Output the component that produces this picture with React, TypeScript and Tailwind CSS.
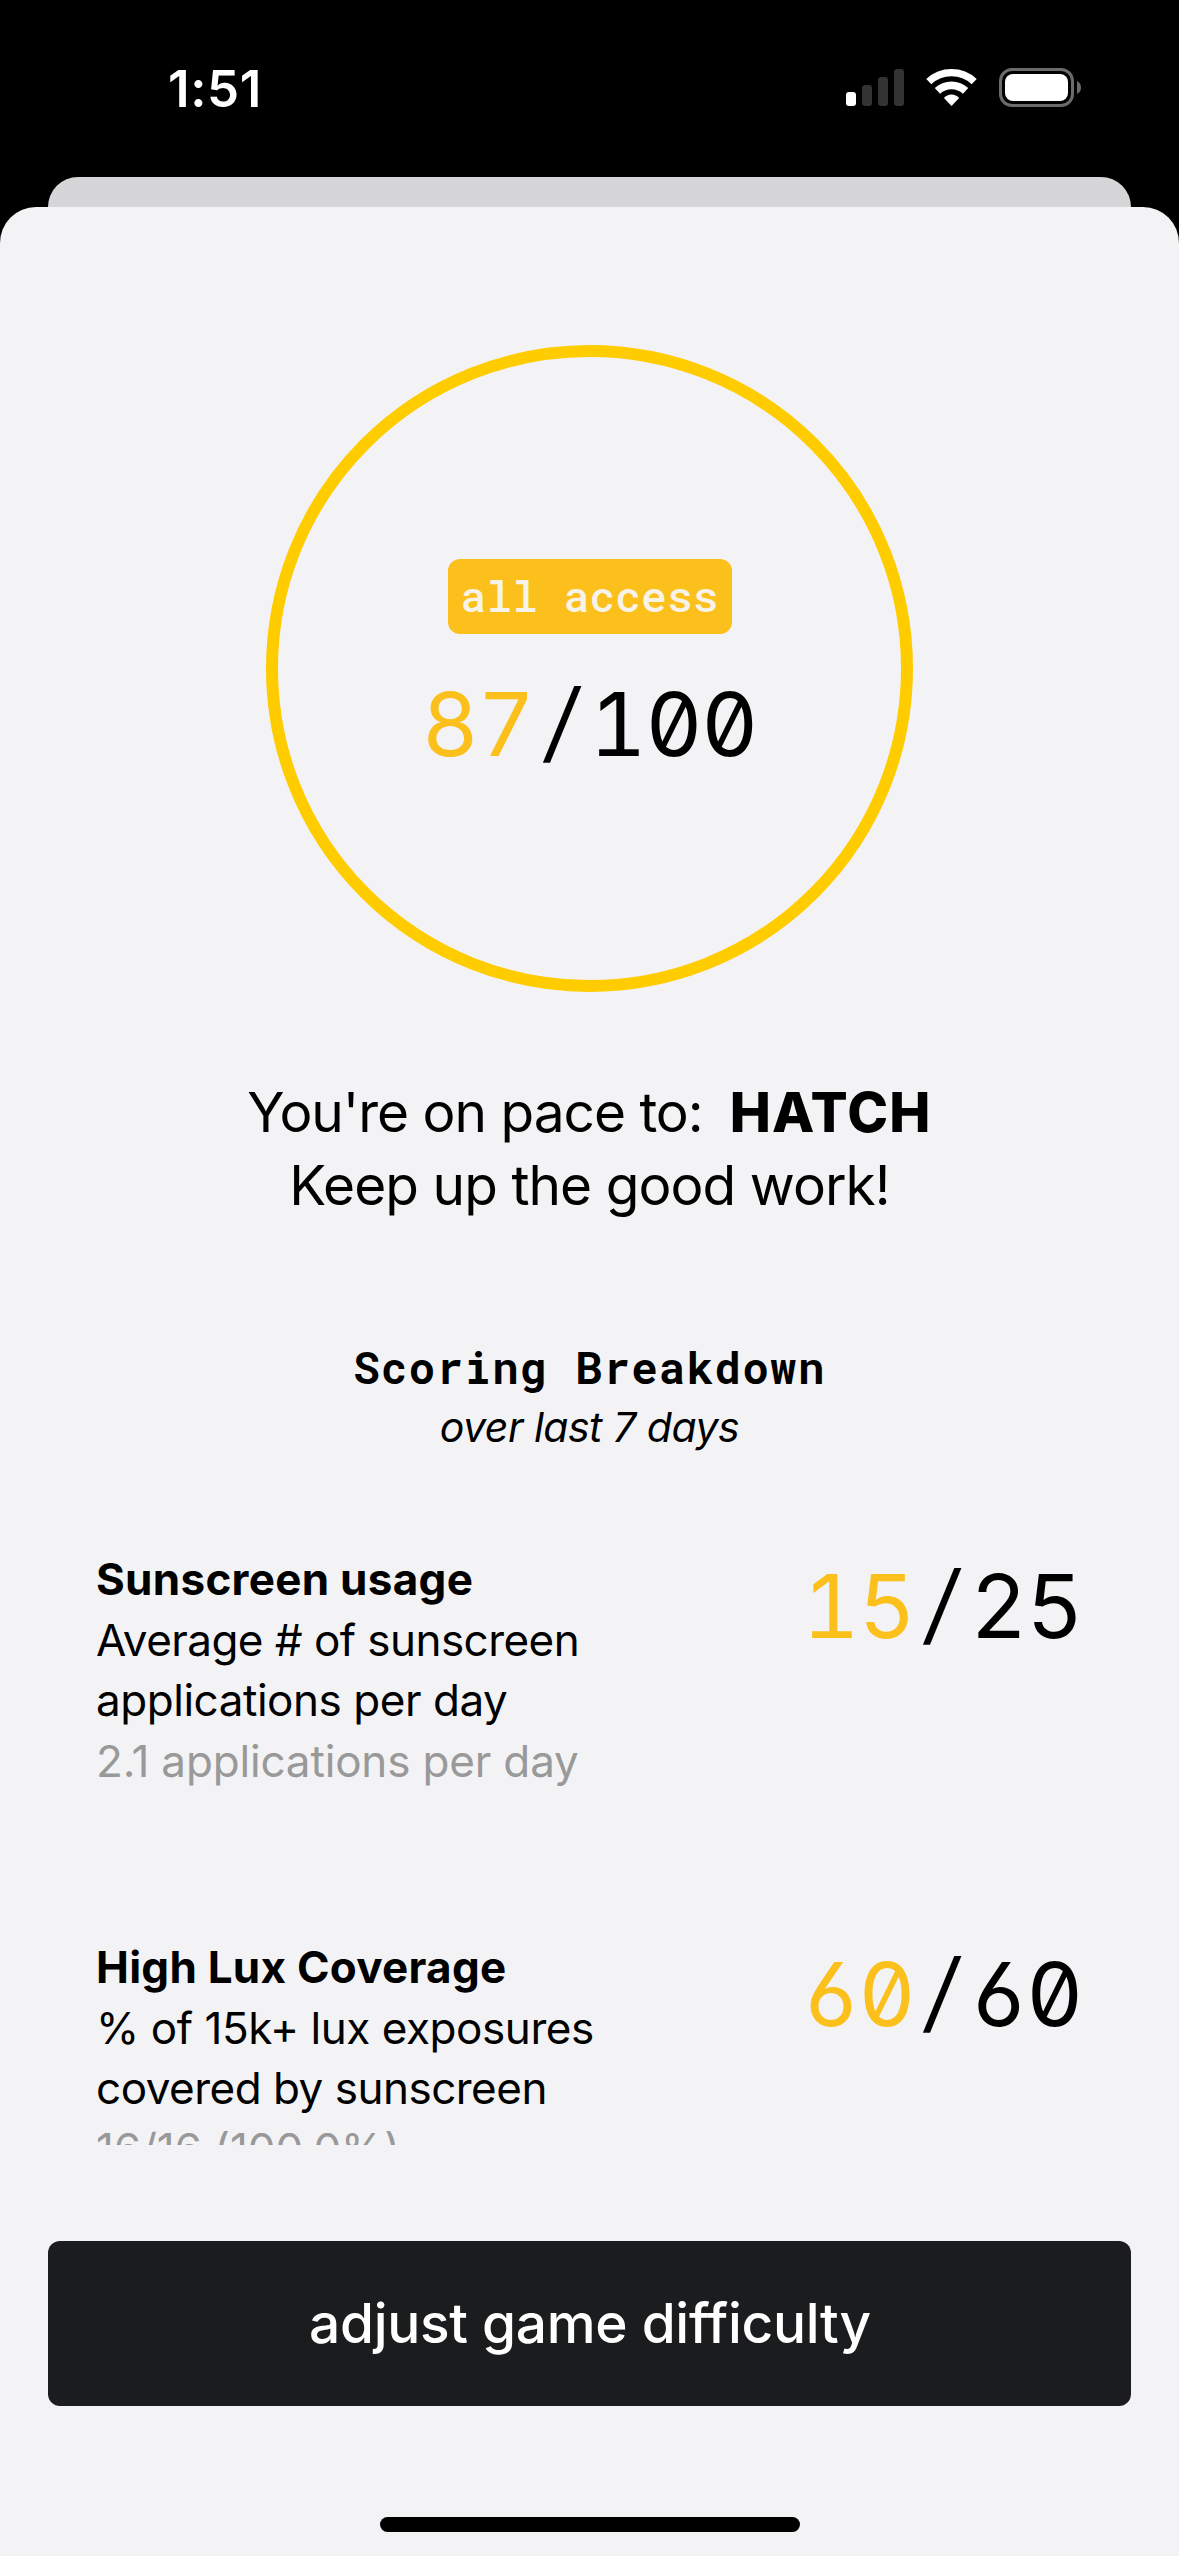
import React from 'react';

interface Metric {
  title: string;
  titleClass: string;
  lines: { text: string; className: string }[];
  value: string;
  valueClass: string;
  score: number;
  max: number;
}

interface ScoreProps {
  score: number;
  max: number;
}

const metrics: Metric[] = [
  {
    title: 'Sunscreen usage',
    titleClass: 'tracking-[0.29px]',
    lines: [
      { text: 'Average # of sunscreen', className: 'tracking-[-0.55px]' },
      { text: 'applications per day', className: 'tracking-[-0.46px]' },
    ],
    value: '2.1 applications per day',
    valueClass: 'tracking-[-0.16px]',
    score: 15,
    max: 25,
  },
  {
    title: 'High Lux Coverage',
    titleClass: 'tracking-[0.26px]',
    lines: [
      { text: '% of 15k+ lux exposures', className: 'tracking-[-0.44px]' },
      { text: 'covered by sunscreen', className: 'tracking-[-0.5px]' },
    ],
    value: '16/16 (100.0%)',
    valueClass: 'tracking-[-0.1px]',
    score: 60,
    max: 60,
  },
];

const StatusBar: React.FC = () => (
  <div className="flex h-[177px] items-start justify-between pt-[58px] pr-[97px] pl-[168px]">
    <span className="text-[51px] leading-[61px] font-semibold tracking-[0.6px] text-white">1:51</span>
    <svg width="236" height="40" viewBox="0 0 236 40" className="mt-[10px]">
      {/* signal */}
      <rect x="0" y="24" width="10" height="14" rx="3" fill="#fff" />
      <rect x="16" y="17" width="10" height="21" rx="3" fill="#333" />
      <rect x="32" y="9" width="10" height="29" rx="3" fill="#333" />
      <rect x="48" y="1" width="10" height="37" rx="3" fill="#333" />
      {/* wifi */}
      <g fill="none" stroke="#fff">
        <path d="M82.8 13.6A33.3 33.3 0 0 1 128.2 13.6" strokeWidth="7.4" />
        <path d="M91.4 22.9A20.7 20.7 0 0 1 119.6 22.9" strokeWidth="7.8" />
      </g>
      <path d="M97.9 29.9Q101 26.6 105.5 26.4Q110 26.6 113.1 29.9L105.5 38Z" fill="#fff" />
      {/* battery */}
      <rect x="154.5" y="1.5" width="72" height="36" rx="11.5" fill="none" stroke="#6b6b6b" strokeWidth="3" />
      <rect x="159" y="6" width="63" height="27" rx="8" fill="#fff" />
      <path d="M231 13Q235 15 235 19.5Q235 24 231 26Z" fill="#6b6b6b" />
    </svg>
  </div>
);

const Score: React.FC<ScoreProps> = ({ score, max }) => (
  <p className="flex text-[88px] leading-[96px] tracking-[-1.2px] [font-feature-settings:'tnum','zero','ss01']">
    <span className="text-[#fbc01b]">{score}</span>
    <span className="w-[56px] -translate-y-[3px] -skew-x-[8deg] text-center">/</span>
    <span>{max}</span>
  </p>
);

const MetricRow: React.FC<{ metric: Metric }> = ({ metric }) => (
  <div className="flex items-start justify-between text-[44px]">
    <div className="whitespace-nowrap">
      <h3 className={`leading-[61px] font-bold ${metric.titleClass}`}>{metric.title}</h3>
      {metric.lines.map((line) => (
        <p key={line.text} className={`leading-[60px] ${line.className}`}>
          {line.text}
        </p>
      ))}
      <p className={`leading-[62px] text-[#999] ${metric.valueClass}`}>{metric.value}</p>
    </div>
    <div className="mt-[9px]">
      <Score score={metric.score} max={metric.max} />
    </div>
  </div>
);

const App: React.FC = () => {
  return (
    <div className="h-[2556px] w-[1179px] overflow-hidden bg-black font-['Inter','Liberation_Sans',sans-serif] text-black">
      <StatusBar />

      {/* Card behind the sheet */}
      <div className="mx-[48px] h-[30px] rounded-t-[30px] bg-[#d6d6d8]" />

      <main className="flex h-[2349px] flex-col items-center rounded-t-[36px] bg-[#f3f3f5]">
        <div className="flex h-[1938px] w-full flex-col items-center overflow-hidden pt-[138px]">
          <div className="flex size-[647px] shrink-0 flex-col items-center rounded-full border-[12px] border-[#ffcc00] pt-[202px]">
            <span className="mb-[42px] flex h-[75px] w-[284px] items-center justify-center rounded-[12px] bg-[#fbc01b] pb-[2px] font-['Roboto_Mono','DejaVu_Sans_Mono',monospace] text-[43px] leading-[73px] font-medium text-[#f8f3e8]">
              all access
            </span>
            <Score score={87} max={100} />
          </div>

          <div className="mt-[84px] text-center text-[55px] leading-[73px]">
            <p className="flex justify-center gap-[27px]">
              <span className="tracking-[-1.02px]">You're on pace to:</span>
              <span className="font-extrabold tracking-[1.2px]">HATCH</span>
            </p>
            <p className="tracking-[-0.94px]">Keep up the good work!</p>
          </div>

          <h2 className="mt-[115px] font-['Roboto_Mono','DejaVu_Sans_Mono',monospace] text-[44px] leading-[60px] font-bold tracking-[1.4px]">
            Scoring Breakdown
          </h2>
          <p className="text-[41px] leading-[60px] tracking-[-0.5px] italic">over last 7 days</p>

          <div className="mt-[92px] flex w-full flex-col gap-[145px] pr-[97px] pl-[96px]">
            {metrics.map((metric) => (
              <MetricRow key={metric.title} metric={metric} />
            ))}
          </div>
        </div>

        <button className="mt-[96px] h-[165px] w-[1083px] shrink-0 rounded-[12px] bg-[#1b1c1e] pl-[1px] text-[55px] font-medium tracking-[-0.31px] text-white">
          adjust game difficulty
        </button>
        <div className="mt-[111px] h-[15px] w-[420px] shrink-0 rounded-full bg-black" />
      </main>
    </div>
  );
};

export default App;
